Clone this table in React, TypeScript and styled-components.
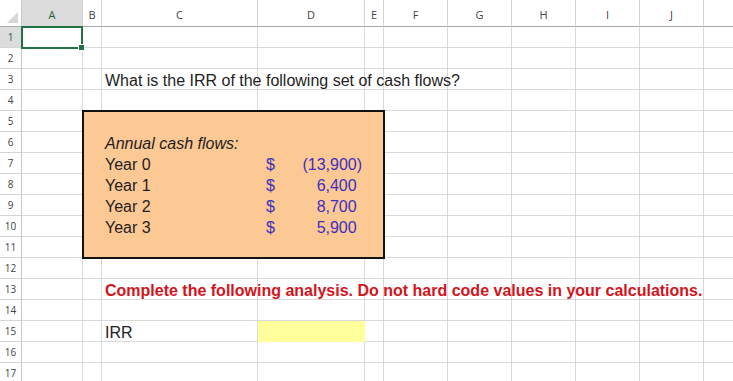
import * as React from 'react'
import styled, { createGlobalStyle } from 'styled-components'

const COLUMNS = ['A', 'B', 'C', 'D', 'E', 'F', 'G', 'H', 'I', 'J', 'K']
const WIDTHS = [22, 61, 19, 156, 107, 19, 64, 64, 64, 64, 64, 64]
const ROW_COUNT = 17

// sheet row n sits on grid row n + 1, column letter index i on grid column i + 2
const gr = (row: number) => row + 1
const gc = (letter: string) => COLUMNS.indexOf(letter) + 2

const cashFlows = [
  { label: 'Year 0', value: '(13,900)', negative: true },
  { label: 'Year 1', value: '6,400' },
  { label: 'Year 2', value: '8,700' },
  { label: 'Year 3', value: '5,900' },
]

const App: React.FC = () => {
  const rows = Array.from({ length: ROW_COUNT }, (_, i) => i + 1)

  return (
    <>
      <GlobalStyle />
      <Sheet>
        <Corner $r={1} $c={1}>
          <CornerMark />
        </Corner>
        {COLUMNS.map((letter, i) => (
          <ColumnHeader key={letter} $r={1} $c={i + 2} $selected={letter === 'A'}>
            {/* K is cut by the window edge, its letter is out of view */}
            {letter === 'K' ? '' : letter}
          </ColumnHeader>
        ))}

        {rows.map((row) => (
          <React.Fragment key={row}>
            <RowHeader $r={gr(row)} $c={1} $selected={row === 1}>
              {row}
            </RowHeader>
            {COLUMNS.map((letter) => (
              <Cell
                key={letter}
                $r={gr(row)}
                $c={gc(letter)}
                $fill={row === 15 && letter === 'D' ? '#ffff9c' : undefined}
              />
            ))}
          </React.Fragment>
        ))}

        <CashBox $r={`${gr(5)} / ${gr(12)}`} $c={`${gc('B')} / ${gc('F')}`} />

        <Selection $r={gr(1)} $c={gc('A')}>
          <FillHandle />
        </Selection>

        <Text $r={gr(3)} $c={gc('C')}>
          What is the IRR of the following set of cash flows?
        </Text>

        <Text $r={gr(6)} $c={gc('C')} $italic>
          Annual cash flows:
        </Text>
        {cashFlows.map((flow, i) => (
          <React.Fragment key={flow.label}>
            <Text $r={gr(7 + i)} $c={gc('C')}>
              {flow.label}
            </Text>
            <Money $r={gr(7 + i)} $c={gc('D')}>
              <span>$</span>
              <span>
                {flow.value}
                {!flow.negative && <Spacer>)</Spacer>}
              </span>
            </Money>
          </React.Fragment>
        ))}

        <Text $r={gr(13)} $c={gc('C')} $warning>
          Complete the following analysis. Do not hard code values in your calculations.
        </Text>

        <Text $r={gr(15)} $c={gc('C')}>
          IRR
        </Text>
      </Sheet>
    </>
  )
}

const GlobalStyle = createGlobalStyle`
  html, body {
    margin: 0;
    padding: 0;
    background: #ffffff;
    overflow: hidden;
  }

  body {
    font-family: 'Liberation Sans', Arial, sans-serif;
  }
`

type Placed = { $r: number | string; $c: number | string }

const placed = ({ $r, $c }: Placed) => `
  grid-row: ${$r};
  grid-column: ${$c};
`

const Sheet = styled.div`
  display: grid;
  grid-template-columns: ${WIDTHS.map((w) => `${w}px`).join(' ')};
  grid-template-rows: 27px repeat(${ROW_COUNT}, 21px);
  width: 733px;
  height: 381px;
  overflow: hidden;
`

const HeaderBase = styled.div<Placed & { $selected?: boolean }>`
  ${placed}
  box-sizing: border-box;
  display: flex;
  align-items: center;
  justify-content: center;
  font-family: 'Open Sans', 'DejaVu Sans', sans-serif;
  background: ${(p) => (p.$selected ? '#dcdcdc' : '#ffffff')};
  color: ${(p) => (p.$selected ? '#2d5b41' : '#444444')};
`

const Corner = styled(HeaderBase)`
  border-right: 1px solid #c8c8c8;
  border-bottom: 1px solid #a9a9a9;
  align-items: flex-end;
  justify-content: flex-end;
`

const CornerMark = styled.div`
  width: 0;
  height: 0;
  margin: 0 3px 3px 0;
  border-left: 11px solid transparent;
  border-bottom: 11px solid #d6d6d6;
`

const ColumnHeader = styled(HeaderBase)`
  padding-top: 3px;
  font-size: 11px;
  border-right: 1px solid #d4d4d4;
  border-bottom: 1px solid #a9a9a9;
`

const RowHeader = styled(HeaderBase)`
  font-size: 10px;
  border-right: 1px solid #c8c8c8;
  border-bottom: 1px solid #d4d4d4;
`

const Cell = styled.div<Placed & { $fill?: string }>`
  ${placed}
  box-sizing: border-box;
  background: ${(p) => p.$fill ?? 'transparent'};
  border-right: 1px solid ${(p) => p.$fill ?? '#d9d9d9'};
  border-bottom: 1px solid ${(p) => p.$fill ?? '#d9d9d9'};
`

const CashBox = styled.div<Placed>`
  ${placed}
  margin: -1px;
  background: #fcc894;
  border: 2px solid #111111;
`

const Selection = styled.div<Placed>`
  ${placed}
  position: relative;
  margin: -1px 0 -1px -1px;
  border: 2px solid #217346;
`

const FillHandle = styled.div`
  position: absolute;
  right: -4px;
  bottom: -4px;
  width: 5px;
  height: 5px;
  background: #217346;
  border: 1px solid #ffffff;
`

const Text = styled.div<Placed & { $italic?: boolean; $warning?: boolean }>`
  ${placed}
  display: flex;
  align-items: flex-end;
  padding: 0 3px;
  white-space: nowrap;
  font-size: 16px;
  line-height: 18px;
  font-style: ${(p) => (p.$italic ? 'italic' : 'normal')};
  font-weight: ${(p) => (p.$warning ? 700 : 400)};
  color: ${(p) => (p.$warning ? '#d4141c' : '#1e1e1e')};
`

const Money = styled(Text)`
  justify-content: space-between;
  padding: 0 3px 0 8px;
  color: #3d2fbd;
`

const Spacer = styled.span`
  visibility: hidden;
`

export default App
